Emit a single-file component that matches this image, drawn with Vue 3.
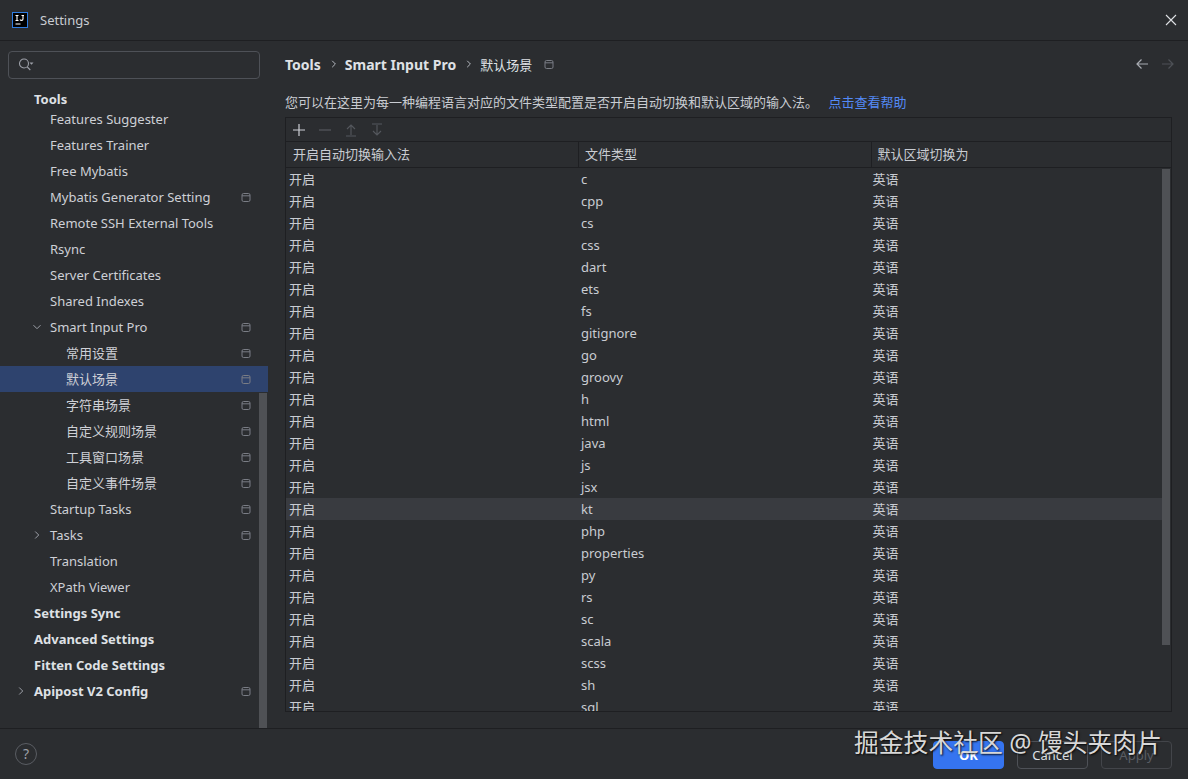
<script setup>
const navItems = [
  { label: 'Tools', level: 0, bold: true, first: true },
  { label: 'Features Suggester', level: 1 },
  { label: 'Features Trainer', level: 1 },
  { label: 'Free Mybatis', level: 1 },
  { label: 'Mybatis Generator Setting', level: 1, pin: true },
  { label: 'Remote SSH External Tools', level: 1 },
  { label: 'Rsync', level: 1 },
  { label: 'Server Certificates', level: 1 },
  { label: 'Shared Indexes', level: 1 },
  { label: 'Smart Input Pro', level: 1, pin: true, arrow: 'down' },
  { label: '常用设置', level: 2, pin: true },
  { label: '默认场景', level: 2, pin: true, selected: true },
  { label: '字符串场景', level: 2, pin: true },
  { label: '自定义规则场景', level: 2, pin: true },
  { label: '工具窗口场景', level: 2, pin: true },
  { label: '自定义事件场景', level: 2, pin: true },
  { label: 'Startup Tasks', level: 1, pin: true },
  { label: 'Tasks', level: 1, pin: true, arrow: 'right' },
  { label: 'Translation', level: 1 },
  { label: 'XPath Viewer', level: 1 },
  { label: 'Settings Sync', level: 0, bold: true },
  { label: 'Advanced Settings', level: 0, bold: true },
  { label: 'Fitten Code Settings', level: 0, bold: true },
  { label: 'Apipost V2 Config', level: 0, bold: true, pin: true, arrow: 'right' }
]
const fileTypes = ['c', 'cpp', 'cs', 'css', 'dart', 'ets', 'fs', 'gitignore', 'go', 'groovy', 'h', 'html', 'java', 'js', 'jsx', 'kt', 'php', 'properties', 'py', 'rs', 'sc', 'scala', 'scss', 'sh', 'sql']
</script>

<template>
  <div class="window">
    <header class="titlebar">
      <svg class="logo" width="16" height="16" viewBox="0 0 16 16">
        <rect x="0.5" y="0.5" width="15" height="15" fill="#000" stroke="#2f7de1" />
        <path d="M3.5 3.5h3M5 3.5v5M3.5 8.5h3M8 7.5c.5 1.2 3 1.3 3-.5V3.5M9.5 3.5H12M3.5 12h5" fill="none" stroke="#fff" stroke-width="1.1" />
      </svg>
      <span class="title">Settings</span>
      <svg class="close" width="12" height="12" viewBox="0 0 12 12">
        <path d="M1 1l10 10M11 1L1 11" stroke="#dfe1e5" stroke-width="1.1" fill="none" />
      </svg>
    </header>

    <div class="main">
      <aside class="sidebar">
        <div class="search">
          <svg width="16" height="16" viewBox="0 0 16 16">
            <circle cx="6" cy="6.5" r="4.5" fill="none" stroke="#9da0a8" stroke-width="1.1" />
            <path d="M9.3 10l3 3" stroke="#9da0a8" stroke-width="1.1" />
            <path d="M11.5 5.5h4l-2 2.2z" fill="#9da0a8" />
          </svg>
        </div>
        <nav class="tree">
          <div
            v-for="item in navItems"
            :key="item.label"
            class="node"
            :class="['level' + item.level, { bold: item.bold, selected: item.selected, first: item.first }]"
          >
            <svg v-if="item.arrow" class="arrow" width="10" height="10" viewBox="0 0 10 10">
              <path v-if="item.arrow === 'down'" d="M1.5 3.2L5 6.7l3.5-3.5" fill="none" stroke="#9da0a8" />
              <path v-else d="M3.2 1.5L6.7 5 3.2 8.5" fill="none" stroke="#9da0a8" />
            </svg>
            <span class="node-label">{{ item.label }}</span>
            <svg v-if="item.pin" class="pin" width="10" height="9" viewBox="0 0 10 9">
              <rect x="1" y="0.5" width="8" height="8" rx="1.5" fill="none" stroke="#7a7d85" />
              <path d="M1 2.8h8" stroke="#7a7d85" />
            </svg>
          </div>
        </nav>
        <div class="side-scroll"></div>
      </aside>

      <section class="content">
        <div class="crumbs">
          <strong>Tools</strong>
          <svg class="sep" width="8" height="10" viewBox="0 0 8 10"><path d="M2.2 1.8L5.4 5 2.2 8.2" fill="none" stroke="#b4b8bf" /></svg>
          <strong>Smart Input Pro</strong>
          <svg class="sep" width="8" height="10" viewBox="0 0 8 10"><path d="M2.2 1.8L5.4 5 2.2 8.2" fill="none" stroke="#b4b8bf" /></svg>
          <span class="crumb-last">默认场景</span>
          <svg class="crumb-pin" width="10" height="9" viewBox="0 0 10 9">
            <rect x="1" y="0.5" width="8" height="8" rx="1.5" fill="none" stroke="#7a7d85" />
            <path d="M1 2.8h8" stroke="#7a7d85" />
          </svg>
          <div class="nav-arrows">
            <svg width="14" height="12" viewBox="0 0 14 12"><path d="M13 6H2M6.5 1.5L2 6l4.5 4.5" fill="none" stroke="#a8abb2" stroke-width="1.2" /></svg>
            <svg width="14" height="12" viewBox="0 0 14 12"><path d="M1 6h11M7.5 1.5L12 6l-4.5 4.5" fill="none" stroke="#4e5157" stroke-width="1.2" /></svg>
          </div>
        </div>

        <p class="desc">
          您可以在这里为每一种编程语言对应的文件类型配置是否开启自动切换和默认区域的输入法。
          <a class="help">点击查看帮助</a>
        </p>

        <div class="table">
          <div class="toolbar">
            <svg width="14" height="14" viewBox="0 0 14 14"><path d="M7 1v12M1 7h12" stroke="#ced0d6" stroke-width="1.2" /></svg>
            <svg width="14" height="14" viewBox="0 0 14 14"><path d="M1 7h12" stroke="#55585e" stroke-width="1.2" /></svg>
            <svg width="14" height="14" viewBox="0 0 14 14"><path d="M7 12V2.5M3 6l4-4 4 4M2 13h10" fill="none" stroke="#55585e" stroke-width="1.1" /></svg>
            <svg width="14" height="14" viewBox="0 0 14 14"><path d="M7 2v9.5M3 8l4 4 4-4M2 1h10" fill="none" stroke="#55585e" stroke-width="1.1" /></svg>
          </div>
          <div class="thead">
            <div class="th">开启自动切换输入法</div>
            <div class="th">文件类型</div>
            <div class="th">默认区域切换为</div>
          </div>
          <div class="tbody">
            <div v-for="t in fileTypes" :key="t" class="tr" :class="{ hover: t === 'kt' }">
              <div class="td">开启</div>
              <div class="td">{{ t }}</div>
              <div class="td">英语</div>
            </div>
            <div class="table-scroll"></div>
          </div>
        </div>
      </section>
    </div>

    <footer class="footer">
      <div class="help-btn">?</div>
      <div class="buttons">
        <button class="btn primary">OK</button>
        <button class="btn">Cancel</button>
        <button class="btn disabled">Apply</button>
      </div>
    </footer>

    <div class="watermark">掘金技术社区 @ 馒头夹肉片</div>
  </div>
</template>

<style scoped>
.window {
  position: relative;
  width: 1188px;
  height: 779px;
  overflow: hidden;
  display: flex;
  flex-direction: column;
  background: #2b2d30;
  color: #dfe1e5;
  font-family: "Noto Sans", "Noto Sans CJK SC", sans-serif;
  font-size: 13px;
}
.titlebar {
  height: 40px;
  flex: none;
  display: flex;
  align-items: center;
  padding: 0 10px 0 12px;
  border-bottom: 1px solid #1e1f22;
  box-sizing: content-box;
}
.title { margin-left: 12px; color: #c9ccd2; }
.close { margin-left: auto; margin-right: 1px; }
.main { flex: 1; min-height: 0; display: flex; }
.sidebar {
  position: relative;
  width: 268px;
  flex: none;
  padding-top: 10px;
  box-sizing: border-box;
}
.search {
  margin: 0 8px;
  height: 28px;
  box-sizing: border-box;
  border: 1px solid #4e5157;
  border-radius: 4px;
  display: flex;
  align-items: center;
  padding-left: 9px;
}
.tree { margin-top: 7px; }
.node {
  height: 26px;
  display: flex;
  align-items: center;
  position: relative;
  padding-right: 17px;
  line-height: 26px;
  color: #ced0d6;
}
.node.first { height: 20px; padding-top: 6px; box-sizing: border-box; line-height: 14px; }
.node.bold { font-weight: 700; color: #dfe1e5; }
.level0 { padding-left: 34px; }
.level1 { padding-left: 50px; }
.level2 { padding-left: 66px; }
.selected { background: #2e436e; }
.arrow { position: absolute; margin-left: -18px; }
.pin { margin-left: auto; }
.side-scroll {
  position: absolute;
  left: 259px;
  width: 8px;
  top: 352px;
  bottom: 0;
  background: #4f5155;
}
.content { flex: 1; min-width: 0; padding: 0 16px 0 17px; }
.crumbs {
  height: 24px;
  margin-top: 11px;
  display: flex;
  align-items: center;
  font-size: 14px;
  color: #dfe1e5;
}
.crumbs strong { font-weight: 700; }
.sep { margin: 0 7px 0 9px; }
.crumb-last { font-size: 13px; }
.crumb-pin { margin-left: 12px; }
.nav-arrows { margin-left: auto; display: flex; gap: 12px; margin-right: -3px; }
.desc {
  margin: 17px 0 0;
  height: 18px;
  line-height: 18px;
  color: #c9ccd2;
  white-space: nowrap;
}
.help { margin-left: 7px; color: #548af7; }
.table {
  margin-top: 6px;
  height: 595px;
  box-sizing: border-box;
  border: 1px solid #1e1f22;
  display: flex;
  flex-direction: column;
}
.toolbar {
  height: 24px;
  flex: none;
  display: flex;
  align-items: center;
  gap: 12px;
  padding-left: 6px;
  border-bottom: 1px solid #1e1f22;
  box-sizing: border-box;
}
.thead {
  height: 26px;
  flex: none;
  display: grid;
  grid-template-columns: 292px 292.5px 1fr;
  border-bottom: 1px solid #1e1f22;
  box-sizing: border-box;
}
.th {
  padding-left: 6px;
  line-height: 25px;
  color: #c9ccd2;
  border-left: 1px solid #1e1f22;
}
.th:first-child { border-left: 0; padding-left: 7px; }
.tbody { position: relative; flex: 1; min-height: 0; overflow: hidden; padding-right: 9px; }
.tr {
  height: 22px;
  display: grid;
  grid-template-columns: 292px 291.5px 1fr;
  line-height: 22px;
  color: #c9ccd2;
}
.tr.hover { background: #393b40; }
.td { padding-left: 3px; }
.table-scroll {
  position: absolute;
  right: 1px;
  top: 1px;
  width: 8px;
  height: 476px;
  background: #4f5155;
}
.footer {
  height: 51px;
  flex: none;
  border-top: 1px solid #1e1f22;
  box-sizing: border-box;
  display: flex;
  align-items: center;
  padding: 0 16px 0 15px;
}
.help-btn {
  width: 22px;
  height: 22px;
  box-sizing: border-box;
  border: 1px solid #5a5d63;
  border-radius: 50%;
  text-align: center;
  line-height: 20px;
  font-size: 14px;
  color: #9da0a8;
}
.buttons { margin-left: auto; display: flex; gap: 13px; margin-top: 2px; }
.btn {
  width: 71px;
  height: 28px;
  border: 1px solid #4e5157;
  border-radius: 4px;
  background: transparent;
  color: #dfe1e5;
  font: 13px "Noto Sans", sans-serif;
  padding: 0;
}
.btn.primary { background: #3574f0; border-color: #3574f0; color: #fff; font-weight: 700; }
.btn.disabled { color: #5a5d63; border-color: #43454a; }
.watermark {
  position: absolute;
  left: 854px;
  top: 726px;
  font-size: 24.8px;
  line-height: 32px;
  white-space: nowrap;
  color: #d8d8d8;
  text-shadow: 1px 1px 2px rgba(0, 0, 0, 0.9);
}
</style>
